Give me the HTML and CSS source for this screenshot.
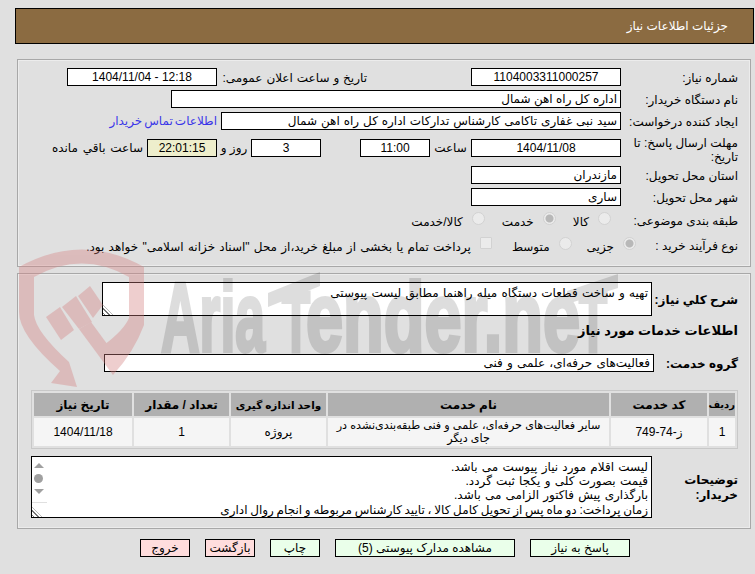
FILE: index.html
```html
<!DOCTYPE html>
<html lang="fa" dir="rtl">
<head>
<meta charset="utf-8">
<title>جزئیات اطلاعات نیاز</title>
<link rel="stylesheet" href="styles.css">
</head>
<body>
<div class="page">
<header class="title-bar"><span>جزئیات اطلاعات نیاز</span></header>

<section class="panel panel-top">
  <div class="row">
    <label class="lbl">شماره نیاز:</label>
    <div class="field w150 center">1104003311000257</div>
    <label class="lbl-public">تاریخ و ساعت اعلان عمومی:</label>
    <div class="field w150 center" dir="ltr">1404/11/04 - 12:18</div>
  </div>
  <div class="row">
    <label class="lbl">نام دستگاه خریدار:</label>
    <div class="field w450">اداره کل راه اهن شمال</div>
  </div>
  <div class="row">
    <label class="lbl">ایجاد کننده درخواست:</label>
    <div class="field w400 spaced">سید نبی غفاری تاکامی کارشناس تدارکات اداره کل راه اهن شمال</div>
    <a class="contact" href="#">اطلاعات تماس خریدار</a>
  </div>
  <div class="row row-tall">
    <label class="lbl">مهلت ارسال پاسخ: تا تاریخ:</label>
    <div class="field w150 center">1404/11/08</div>
    <span class="word word-hour">ساعت</span>
    <div class="field w70 center">11:00</div>
    <span class="spacer"></span>
    <div class="field w70 center">3</div>
    <span class="word word-day">روز و</span>
    <div class="field w70 center timer">22:01:15</div>
    <span class="word word-left">ساعت باقي مانده</span>
  </div>
  <div class="row">
    <label class="lbl">استان محل تحویل:</label>
    <div class="field w150">مازندران</div>
  </div>
  <div class="row">
    <label class="lbl">شهر محل تحویل:</label>
    <div class="field w150">ساری</div>
  </div>
  <div class="row row-choice row-subject">
    <label class="lbl">طبقه بندی موضوعی:</label>
    <div class="choices choices-subject">
      <span class="choice"><input type="radio" disabled><span>کالا</span></span>
      <span class="choice c-gap17"><input type="radio" disabled checked><span>خدمت</span></span>
      <span class="choice c-gap17"><input type="radio" disabled><span>کالا/خدمت</span></span>
    </div>
  </div>
  <div class="row row-choice row-process">
    <label class="lbl">نوع فرآیند خرید :</label>
    <div class="choices choices-process">
      <span class="choice"><input type="radio" disabled checked><span>جزیی</span></span>
      <span class="choice c-gap15"><input type="radio" disabled><span>متوسط</span></span>
      <span class="choice c-gap20"><input type="checkbox" disabled><span class="spaced-more">پرداخت تمام یا بخشی از مبلغ خرید،از محل "اسناد خزانه اسلامی" خواهد بود.</span></span>
    </div>
  </div>
</section>

<section class="panel panel-bottom">
  <div class="row row-desc">
    <label class="lbl-strong lbl-desc">شرح کلي نیاز:</label>
    <div class="field box-desc spaced-more">تهیه و ساخت قطعات دستگاه میله راهنما مطابق لیست پیوستی<i class="grip"></i></div>
  </div>
  <h2 class="heading">اطلاعات خدمات مورد نیاز</h2>
  <div class="row row-group">
    <label class="lbl-strong lbl-group">گروه خدمت:</label>
    <div class="field box-group spaced-more">فعالیت‌های حرفه‌ای، علمی و فنی</div>
  </div>
  <table class="grid">
    <colgroup><col class="c1"><col class="c2"><col class="c3"><col class="c4"><col class="c5"><col class="c6"></colgroup>
    <thead><tr><th class="th-row">ردیف</th><th>کد خدمت</th><th>نام خدمت</th><th class="th-unit">واحد اندازه گیری</th><th>تعداد / مقدار</th><th>تاریخ نیاز</th></tr></thead>
    <tbody><tr><td>1</td><td dir="ltr">749-74-ز</td><td class="td-name">سایر فعالیت‌های حرفه‌ای، علمی و فنی طبقه‌بندی‌نشده در جای دیگر</td><td>پروژه</td><td>1</td><td>1404/11/18</td></tr></tbody>
  </table>
  <div class="row row-notes">
    <label class="lbl-strong lbl-notes">توضیحات خریدار:</label>
    <div class="field box-notes">
      <div class="notes-text">لیست اقلام مورد نیاز پیوست می باشد.<br>قیمت بصورت کلی و یکجا ثبت گردد.<br>بارگذاری پیش فاکتور الزامی می باشد.<br><span class="line-last">زمان پرداخت: دو ماه پس از تحویل کامل کالا ، تایید کارشناس مربوطه و انجام روال اداری</span></div>
      <div class="scroll"><b class="up"></b><b class="thumb"></b><b class="down"></b><i class="grip grip-notes"></i></div>
    </div>
  </div>
</section>

<nav class="actions">
  <button class="btn ok w100">پاسخ به نیاز</button>
  <button class="btn ok w180">مشاهده مدارک پیوستی (5)</button>
  <button class="btn ok w50">چاپ</button>
  <button class="btn no w50">بازگشت</button>
  <button class="btn no w50">خروج</button>
</nav>
</div>
<div class="watermark" aria-hidden="true">
<svg width="755" height="574" viewBox="0 0 755 574">
<g class="wm-shield">
<path d="M19 267 Q82 232 144 267 V325 Q134 352 113 375 L104 345 Q124 330 129 318 V277 Q82 250 34 277 V315 Q36 332 69 362 L77 387 L51 383 L60 371 Q19 335 19 312Z"/>
<path d="M46 317 L60 307 L74 330 L61 340Z"/>
<path d="M62 307 L76 296 L92 322 L79 329Z"/>
<path d="M78 296 L90 286 L103 305 L93 318Z"/>
<path d="M79 329 L91 322 L113 352 L113 375Z"/>
</g>
<g class="wm-word">
<text class="wm-text" x="161" y="351" textLength="104" lengthAdjust="spacingAndGlyphs">Aria</text>
<text class="wm-text wm-t" x="282" y="351" textLength="28" lengthAdjust="spacingAndGlyphs">T</text>
<text class="wm-text" x="306" y="351" textLength="274" lengthAdjust="spacingAndGlyphs">ender.ne</text>
<text class="wm-text wm-t" x="579" y="351" textLength="28" lengthAdjust="spacingAndGlyphs">T</text>
<path d="M268 293 L320 272 V286 L268 307Z"/>
<path d="M567 291 L618 274 V288 L567 304Z"/>
</g>
</svg>
</div>
</body>
</html>
```
FILE: styles.css
```css
* { box-sizing: border-box; }
html, body { margin: 0; height: 100%; }
body {
  background: #e0e0e0;
  color: #000;
  font: 12px/16px "Liberation Sans", "DejaVu Sans", sans-serif;
  position: relative;
  overflow: hidden;
}
.watermark { position: absolute; inset: 0; z-index: 2; direction: ltr; pointer-events: none; }
.watermark svg { display: block; }
.wm-shield { fill: rgb(213, 129, 129); opacity: .38; }
.wm-word { fill: #000; stroke: #000; stroke-width: 0; opacity: .13; }
.wm-text { font: 700 99px "Liberation Sans", sans-serif; stroke-width: 4px; }
.wm-t { font-size: 85px; }
.page { position: relative; z-index: 1; padding-top: 8px; }
.title-bar {
  height: 36px;
  margin: 0 1px 0 15px;
  background: #8b6b41;
  border: 1px solid #000;
  color: #fff;
  display: flex;
  align-items: center;
  padding: 0 25px 0 0;
  font-size: 12px;
}
.panel {
  width: 734px;
  margin: 0 4px 0 17px;
  border: 1px solid #a8a8a8;
  box-shadow: inset 0 0 0 1px #ececec;
}
.panel-top { height: 208px; margin-top: 15px; padding: 8px 12px 0 0; }
.panel-bottom { height: 256px; margin-top: 6px; padding: 8px 12px 0 0; }
.row { display: flex; align-items: center; min-height: 18px; margin-bottom: 4px; }
.row-tall { height: 28px; }
.row-tall .lbl { line-height: 14px; padding-top: 4px; }
.lbl { width: 117px; flex: none; padding-left: 8px; padding-top: 2px; line-height: 16px; }
.lbl-public { flex: none; width: 254px; padding: 2px 104px 0 0; white-space: nowrap; word-spacing: .6px; }
.field {
  height: 18px;
  flex: none;
  background: #fff;
  border: 1px solid #000;
  padding: 0 3px;
  line-height: 16px;
  white-space: nowrap;
  overflow: hidden;
}
.center { text-align: center; }
.spaced { word-spacing: .6px; }
.spaced-more { word-spacing: .9px; }
.w150 { width: 150px; }
.w450 { width: 450px; }
.w400 { width: 400px; }
.w70 { width: 70px; }
.contact { color: #3a36e8; text-decoration: none; margin-right: 4px; white-space: nowrap; word-spacing: -1.3px; }
.word { flex: none; white-space: nowrap; }
.word-hour { width: 41px; text-align: center; }
.spacer { width: 39px; flex: none; }
.word-day { width: 34px; text-align: center; }
.word-left { margin-right: 4px; word-spacing: 1.5px; }
.timer { background: #eeeecc; }
.row-choice { margin-bottom: 0; }
.row-subject { height: 20px; margin-top: 2px; }
.row-process { height: 20px; margin-top: 5px; }
.choices { display: flex; align-items: center; }
.choices-subject { margin-right: 10px; }
.choices-process { margin-right: -15px; }
.choice { display: inline-flex; align-items: center; white-space: nowrap; }
.choice span { padding-top: 3px; }
.c-gap17 { margin-right: 17px; }
.c-gap15 { margin-right: 15px; }
.c-gap20 { margin-right: 20px; }
.choice input {
  appearance: none;
  width: 13px;
  height: 13px;
  margin: 0 0 4px 9px;
  background: #ebebeb;
  border: 1px solid #d2d2d2;
  border-radius: 50%;
  flex: none;
}
.choice input:checked { background: radial-gradient(circle, #b8b8b8 0 3.5px, #ebebeb 4.5px); }
.choice input[type="checkbox"] { border-radius: 1px; width: 12px; height: 12px; }
.lbl-strong { font-weight: 700; font-size: 12px; flex: none; white-space: nowrap; padding-top: 2px; }
.lbl-desc { width: 86px; }
.box-desc { width: 550px; height: 34px; padding: 2px 3px 0; position: relative; }
.row-desc { margin-bottom: 0; }
.heading { margin: 6px 0 0; height: 18px; line-height: 18px; font-size: 13px; }
.row-group { margin: 14px 0 0; }
.lbl-group { width: 84px; }
.box-group { width: 550px; }
.grip {
  position: absolute;
  left: 0;
  bottom: 0;
  width: 10px;
  height: 10px;
  background: repeating-linear-gradient(45deg, transparent 0 1px, #777 1px 2px, transparent 2px 3px);
  clip-path: polygon(0 0, 100% 100%, 0 100%);
}
.grid {
  width: 707px;
  margin: 18px 0 0;
  border: 1px solid #c8c8c8;
  border-spacing: 2px;
  table-layout: fixed;
  background: #e0e0e0;
}
.c1 { width: 26px; }
.c2 { width: 96px; }
.c3 { width: 281px; }
.c4 { width: 95px; }
.c5 { width: 95px; }
.c6 { width: 98px; }
.grid th { height: 23px; background: #b0b0b0; font-size: 12px; padding: 0; white-space: nowrap; }
.grid .th-unit { font-size: 10.5px; }
.grid .th-row { font-size: 10px; }
.grid td { height: 28px; background: #f5f5f5; text-align: center; padding: 0 3px; line-height: 13px; }
.grid .td-name { font-size: 11.2px; padding: 0; }
.row-notes { margin: 7px 0 0; align-items: center; }
.lbl-notes { width: 86px; white-space: normal; line-height: 15px; padding-left: 20px; }
.box-notes { width: 621px; height: 62px; position: relative; display: flex; padding: 0; }
.notes-text { flex: 1; padding: 3px 3px 0; line-height: 14.2px; height: 60px; overflow: hidden; white-space: nowrap; word-spacing: .9px; }
.line-last { word-spacing: -.6px; }
.scroll { width: 15px; height: 60px; flex: none; position: relative; background: #fff; }
.scroll b { position: absolute; left: 2px; display: block; }
.up { top: 6px; border: 5px solid transparent; border-top: 0; border-bottom: 5px solid #a0a0a0; }
.thumb { top: 17px; left: 3px; width: 9px; height: 9px; border-radius: 50%; background: #a0a0a0; }
.down { top: 32px; border: 5px solid transparent; border-bottom: 0; border-top: 5px solid #a0a0a0; }
.scroll::after { content: ""; position: absolute; left: 0; right: 0; top: 45px; border-top: 1px solid #e0e0e0; }
.actions { display: flex; gap: 15px; margin: 10px 125px 0 0; justify-content: flex-start; }
.btn {
  height: 18px;
  border: 1px solid #000;
  padding: 0;
  font: inherit;
  line-height: 16px;
  color: #000;
}
.ok { background: #eaffea; }
.no { background: #ffdddd; }
.w100 { width: 100px; }
.w180 { width: 180px; }
.w50 { width: 50px; }
```
